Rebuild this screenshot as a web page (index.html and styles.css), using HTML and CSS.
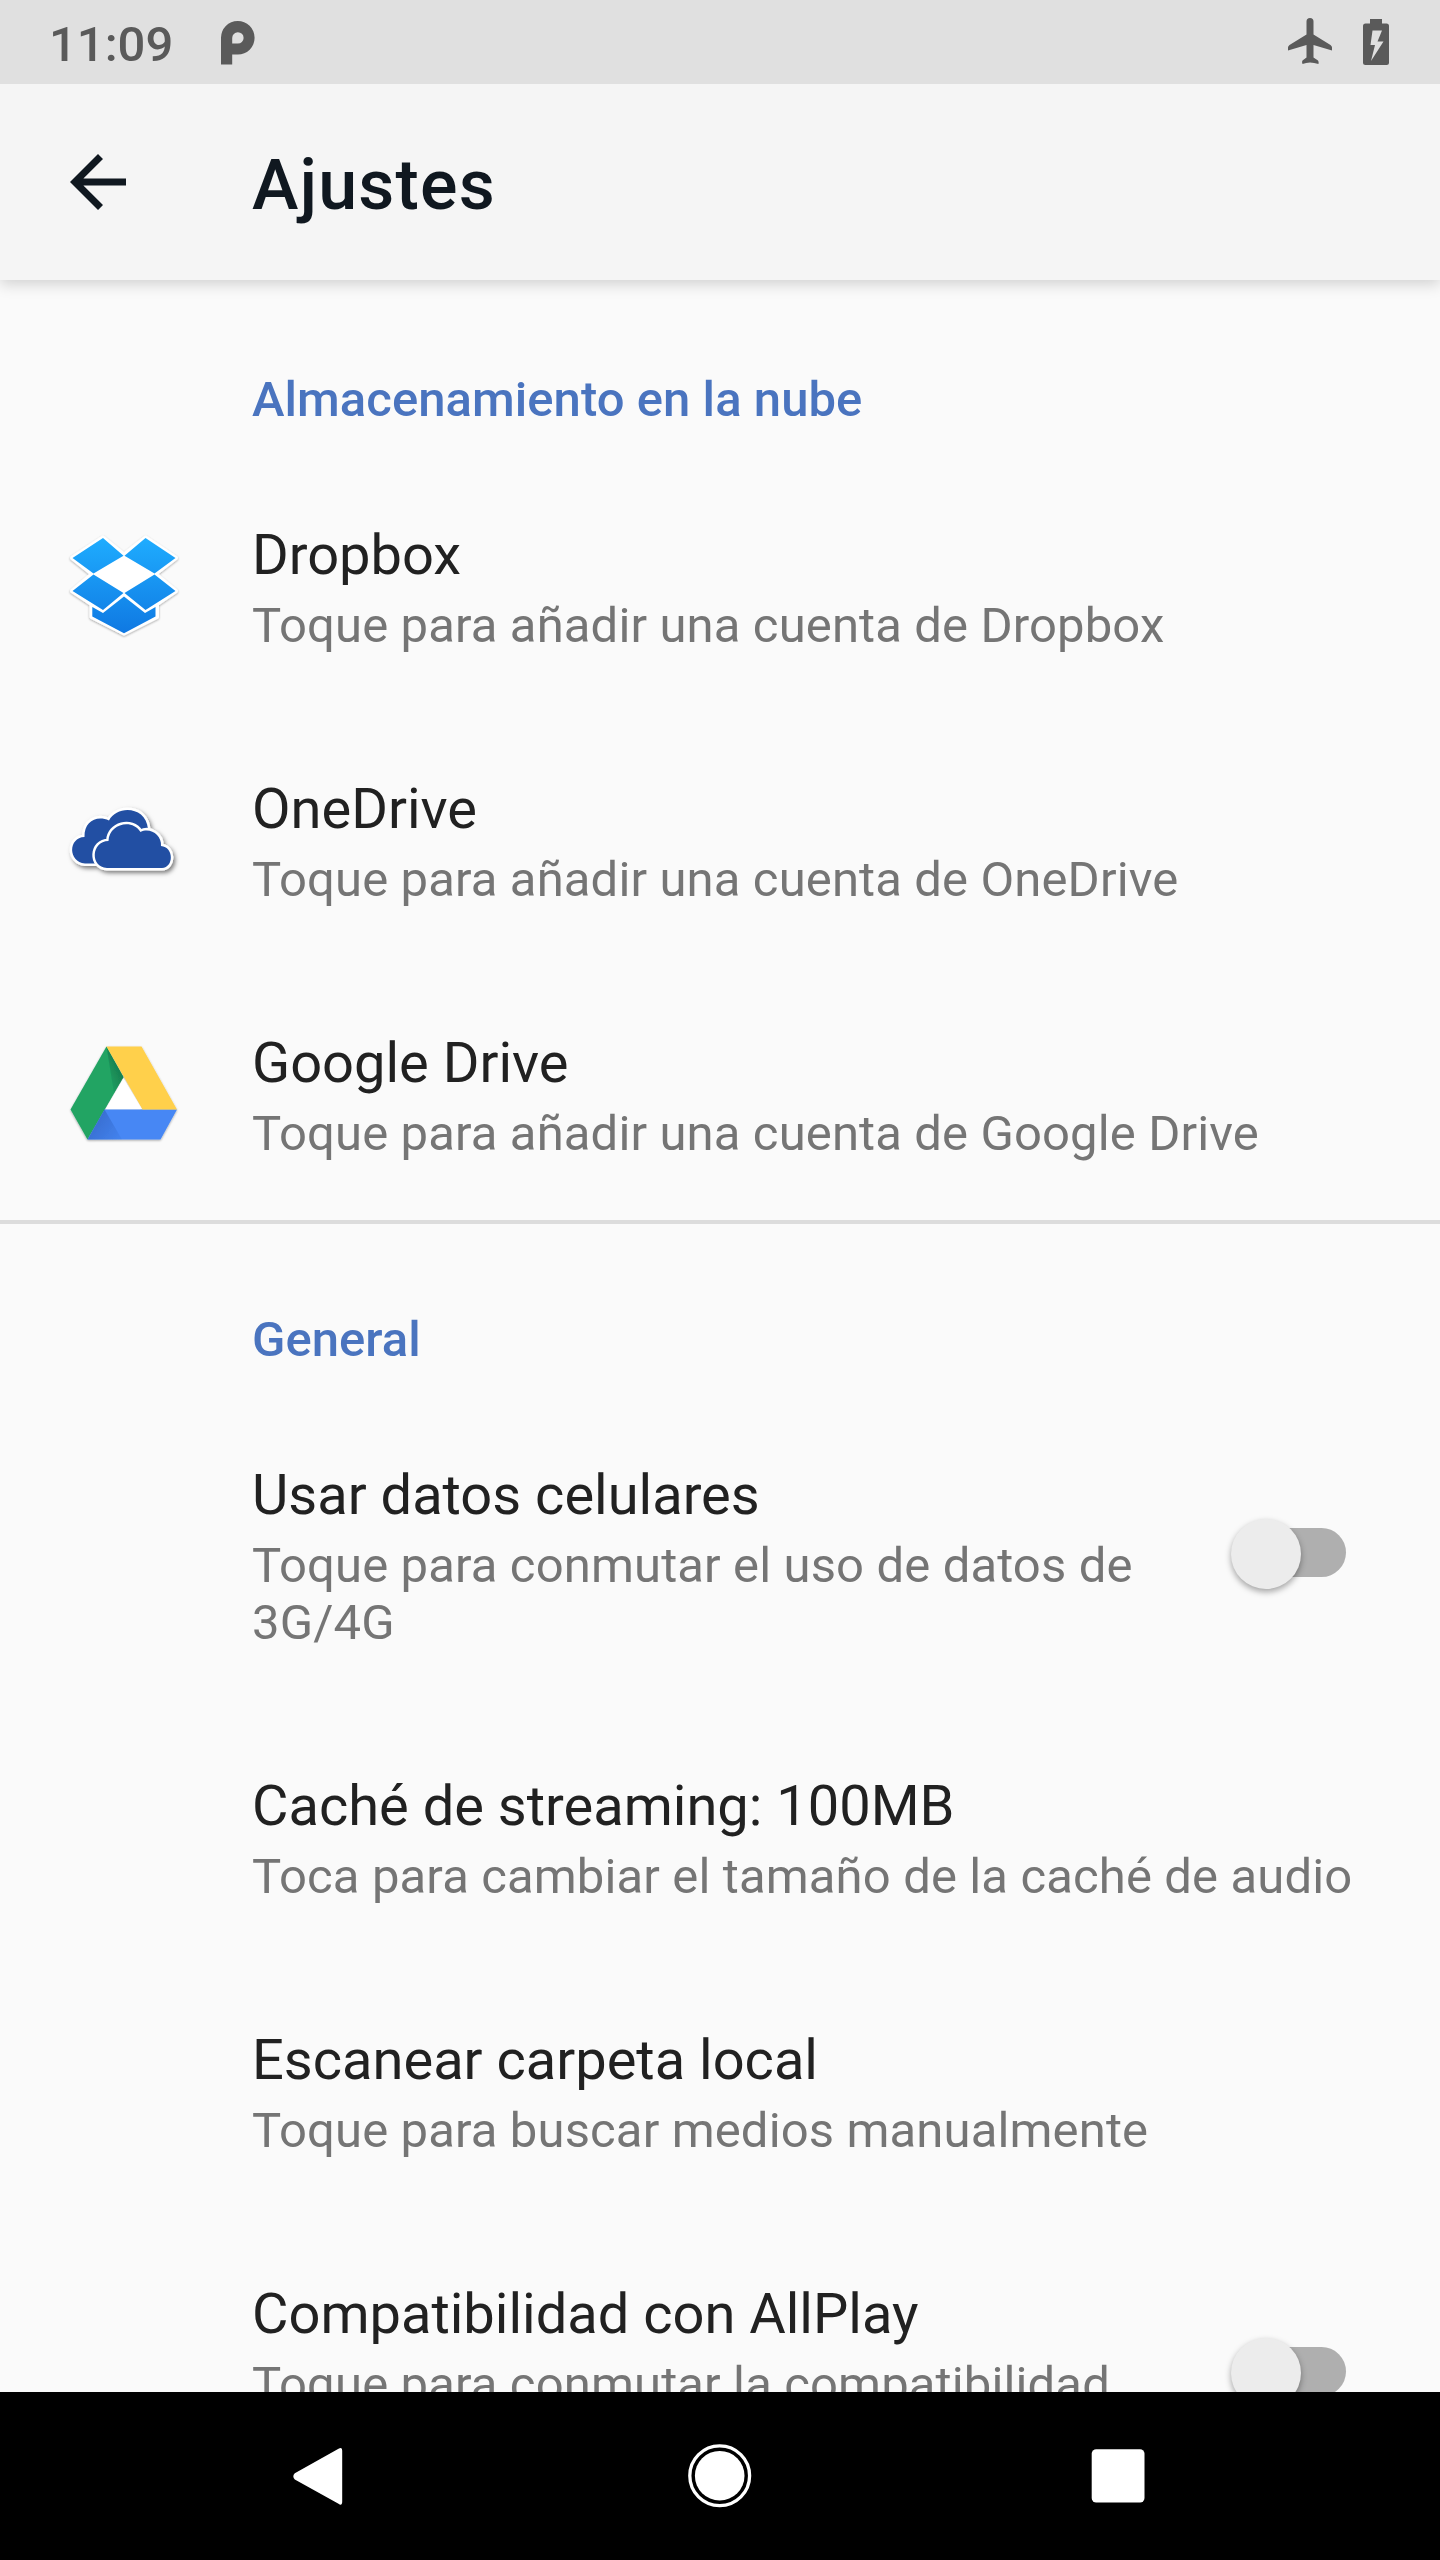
FILE: index.html
```html
<!DOCTYPE html>
<html lang="es">
<head>
<meta charset="utf-8">
<title>Ajustes</title>
<link rel="stylesheet" href="styles.css">
</head>
<body>
<div class="screen">
  <header class="status">
    <span class="clock">11:09</span>
    <svg class="status-p" viewBox="0 0 34 44"><path fill="#5a5a5a" fill-rule="evenodd" d="M0 43.500V17A16.800 16.800 0 1 1 16.800 33.600H11.200V43.500ZM11.200 22.600H16.800A5.700 5.700 0 1 0 11.200 17Z"/></svg>
    <span class="spacer"></span>
    <svg class="plane" viewBox="0 0 44 47"><path fill="#5a5a5a" d="M22 0a3.500 3.500 0 0 1 3.500 3.500V16.500L42.500 27Q44 28 44 29.500V32.500L25.500 27V39.500L30 42.500Q31 43.500 30.500 46Q26 44.500 22 44.500T14.500 46Q13.500 43.500 14.500 42.500L18.500 39.500V27L0 32.500V29.500Q0 28 1.500 27L18.500 16.500V3.500A3.500 3.500 0 0 1 22 0Z"/></svg>
    <svg class="battery" viewBox="0 0 26 46"><path fill="#5a5a5a" d="M7 0H19V4.500H23.500Q26 4.500 26 7V43.500Q26 46 23.500 46H2.500Q0 46 0 43.500V7Q0 4.500 2.500 4.500H7Z"/><path fill="#e0e0e0" d="M9.500 11.500H19L14.500 22.500H20.500L8 42L12 26H7.500Z"/></svg>
  </header>
  <div class="toolbar">
    <svg class="back" viewBox="0 0 56 56"><path fill="#101820" d="M56 24.500V31.500H13.400L33 51.100L28 56L0 28L28 0L33 4.900L13.400 24.500Z"/></svg>
    <h1 class="heading">Ajustes</h1>
  </div>
  <main class="list">
    <h2 class="category">Almacenamiento en la nube</h2>
    <div class="row">
      <div class="icon">
        <svg class="logo" viewBox="0 0 150 150">
          <defs>
            <linearGradient id="dbx" gradientUnits="userSpaceOnUse" x1="0" y1="27" x2="0" y2="124"><stop offset="0" stop-color="#1fadff"/><stop offset="1" stop-color="#0f78e2"/></linearGradient>
            <filter id="soft" x="-20%" y="-20%" width="140%" height="140%"><feDropShadow dx="0" dy="1" stdDeviation="1" flood-opacity=".35"/></filter>
          </defs>
          <path filter="url(#soft)" fill="#fff" stroke="#fff" stroke-width="4" stroke-linejoin="round" d="M53 27.500L74 44.500L95.500 27.500L126 48L105.500 64L126 81L107 94V107L74 123.500L41.500 107V94L22 81L42 64L22 48Z"/>
          <path fill="url(#dbx)" d="M53 28L73.500 45.700L43.500 63.500L22.500 48ZM95.500 28L125.500 48L104.500 63.500L74.500 45.700ZM43.500 64.500L73.500 83L53 100L22.500 81ZM104.500 64.500L125.500 81L95.500 100L74.500 83ZM74 86.500L95 103L105.500 97V106.500L74 123.300L42.300 106.500V97L53 103Z"/>
        </svg>
      </div>
      <div class="body"><div class="title">Dropbox</div><div class="summary">Toque para añadir una cuenta de Dropbox</div></div>
    </div>
    <div class="row">
      <div class="icon">
        <svg class="logo" viewBox="0 0 150 150">
          <defs><filter id="cloudshadow" x="-20%" y="-20%" width="140%" height="150%"><feDropShadow dx="2" dy="2.500" stdDeviation="2" flood-opacity=".5"/></filter></defs>
          <g fill="#2350a3" stroke="#fff" stroke-width="5" stroke-linejoin="round" paint-order="stroke">
            <g filter="url(#cloudshadow)">
              <path d="M35 99.500C18 98 18 73.500 34.500 73C34 57 47 51 59 56.500C67 41 96 42 98 65V99.500Z"/>
              <path d="M57 104C40 103 41 77.500 58.500 77C59 60 82 54 90.500 68C100 63 112 71 111 82C124 83 124 103.500 112 104Z"/>
            </g>
          </g>
        </svg>
      </div>
      <div class="body"><div class="title">OneDrive</div><div class="summary">Toque para añadir una cuenta de OneDrive</div></div>
    </div>
    <div class="row">
      <div class="icon">
        <svg class="logo" viewBox="0 -12 150 150">
          <defs>
            <linearGradient id="shg" gradientUnits="userSpaceOnUse" x1="56" y1="50" x2="70" y2="44"><stop offset="0" stop-color="#11734a" stop-opacity=".1"/><stop offset="1" stop-color="#11633f" stop-opacity=".5"/></linearGradient>
            <linearGradient id="shb" gradientUnits="userSpaceOnUse" x1="45" y1="90" x2="70" y2="108"><stop offset="0" stop-color="#2a56b0" stop-opacity=".5"/><stop offset="1" stop-color="#2a56b0" stop-opacity=".1"/></linearGradient>
          </defs>
          <g filter="url(#soft)">
            <path fill="#20a464" d="M56.500 16.500L73.500 47L37.500 109.500L20.500 79.500Z"/>
            <path fill="url(#shg)" d="M56.500 16.500L73.500 47L64 63Z"/>
            <path fill="#4687f4" d="M54.500 79.500H127L110.500 109.500H37.500Z"/>
            <path fill="url(#shb)" d="M54.500 79.500L72 109.500H37.500Z"/>
            <path fill="#ffd04b" d="M56.500 16.500H91.500L127 79.500H92.500Z"/>
          </g>
          <path fill="#fff" d="M73.500 48L92 79H55.500Z"/>
        </svg>
      </div>
      <div class="body"><div class="title">Google Drive</div><div class="summary">Toque para añadir una cuenta de Google Drive</div></div>
    </div>
    <h2 class="category divided">General</h2>
    <div class="row">
      <div class="icon"></div>
      <div class="body"><div class="title">Usar datos celulares</div><div class="summary">Toque para conmutar el uso de datos de 3G/4G</div></div>
      <div class="switch"><span class="thumb"></span></div>
    </div>
    <div class="row">
      <div class="icon"></div>
      <div class="body"><div class="title">Caché de streaming: 100MB</div><div class="summary">Toca para cambiar el tamaño de la caché de audio</div></div>
    </div>
    <div class="row">
      <div class="icon"></div>
      <div class="body"><div class="title">Escanear carpeta local</div><div class="summary">Toque para buscar medios manualmente</div></div>
    </div>
    <div class="row">
      <div class="icon"></div>
      <div class="body"><div class="title">Compatibilidad con AllPlay</div><div class="summary two-line">Toque para conmutar la compatibilidad</div></div>
      <div class="switch"><span class="thumb"></span></div>
    </div>
  </main>
  <nav class="navbar">
    <svg viewBox="0 0 64 64"><path fill="#fff" d="M49.500 4.800Q53.200 2.300 53.200 7V57.500Q53.200 62.300 49.500 59.800L5.800 35.500Q2.800 32.300 5.800 29.200Z"/></svg>
    <svg viewBox="0 0 64 64"><circle cx="31.700" cy="31.700" r="29.900" fill="none" stroke="#fff" stroke-width="3.300"/><circle cx="31.700" cy="31.700" r="24.800" fill="#fff"/></svg>
    <svg viewBox="0 0 64 64"><rect x="4.700" y="5.200" width="52.800" height="53.300" rx="4.500" fill="#fff"/></svg>
  </nav>
</div>
</body>
</html>
```
FILE: styles.css
```css
* {
  box-sizing: border-box;
}

body {
  margin: 0;
  font-family: Roboto, "Liberation Sans", sans-serif;
  background: #fafafa;
}

.screen {
  display: flex;
  flex-direction: column;
  width: 1440px;
  height: 2560px;
  overflow: hidden;
}

.status {
  display: flex;
  align-items: flex-start;
  flex: none;
  height: 84px;
  padding: 0 51px 0 49px;
  background: #e0e0e0;
}

.clock {
  margin-top: 3px;
  width: 172px;
  font-size: 49px;
  font-weight: 500;
  line-height: 84px;
  color: #5a5a5a;
}

.status-p {
  width: 34px;
  height: 44px;
  margin-top: 21px;
}

.spacer {
  flex: 1;
}

.plane {
  width: 44px;
  height: 47px;
  margin: 18px 31px 0 0;
}

.battery {
  width: 26px;
  height: 46px;
  margin-top: 19px;
}

.toolbar {
  display: flex;
  align-items: center;
  flex: none;
  height: 196px;
  padding-left: 70px;
  background: #f5f5f5;
  box-shadow: 0 4px 14px rgba(0, 0, 0, 0.17);
  clip-path: inset(0 0 -30px 0);
  z-index: 1;
}

.back {
  width: 56px;
  height: 56px;
}

.heading {
  margin: 6px 0 0 126px;
  font-size: 70px;
  font-weight: 500;
  line-height: 82px;
  letter-spacing: 1.15px;
  color: #101820;
}

.list {
  flex: 1;
  min-height: 0;
  overflow: hidden;
}

.category {
  height: 178px;
  margin: 0;
  padding: 91px 0 0 252px;
  font-size: 49px;
  font-weight: 500;
  line-height: 58px;
  letter-spacing: 0.05px;
  color: #4a74bf;
}

.divided {
  padding-top: 87px;
  border-top: 4px solid #dcdcdc;
}

.row {
  display: flex;
  padding: 64px 56px 58px 50px;
}

.icon {
  flex: none;
  width: 202px;
}

.logo {
  display: block;
  width: 150px;
  height: 150px;
  margin: -12px 0 -6px;
}

.body {
  flex: 1;
}

.title {
  font-size: 56px;
  line-height: 66px;
  color: #212121;
}

.summary {
  margin-top: 9px;
  font-size: 49px;
  line-height: 57px;
  letter-spacing: 0.13px;
  color: #757575;
}

.two-line {
  min-height: 114px;
}

.switch {
  flex: none;
  width: 118px;
  height: 72px;
  align-self: center;
  margin: 0 36px 5px 10px;
}

.switch::before {
  content: "";
  display: block;
  width: 108px;
  height: 49px;
  margin: 10px 0 0 8px;
  border-radius: 25px;
  background: #afafaf;
}

.thumb {
  display: block;
  position: relative;
  top: -58px;
  left: 1px;
  width: 70px;
  height: 70px;
  border-radius: 50%;
  background: #ececec;
  box-shadow: 0 3px 6px rgba(0, 0, 0, 0.35);
}

.navbar {
  display: flex;
  flex: none;
  align-items: center;
  justify-content: center;
  gap: 335px;
  height: 168px;
  background: #000;
}

.navbar svg {
  width: 64px;
  height: 64px;
}
```
